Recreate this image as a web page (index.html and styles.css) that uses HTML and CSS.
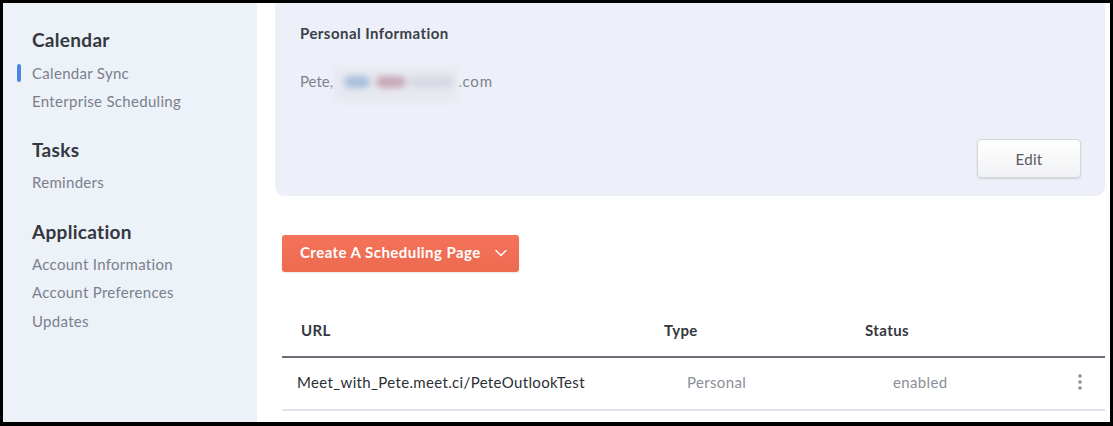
FILE: index.html
```html
<!DOCTYPE html>
<html>
<head>
<meta charset="utf-8">
<link rel="stylesheet" href="styles.css">
</head>
<body>
<div class="frame">
  <aside class="sidebar">
    <div class="group g-cal">
      <h2 class="group-title">Calendar</h2>
      <a class="nav-item active">Calendar Sync</a>
      <a class="nav-item">Enterprise Scheduling</a>
    </div>
    <div class="group g-tasks">
      <h2 class="group-title">Tasks</h2>
      <a class="nav-item">Reminders</a>
    </div>
    <div class="group g-app">
      <h2 class="group-title">Application</h2>
      <a class="nav-item">Account Information</a>
      <a class="nav-item">Account Preferences</a>
      <a class="nav-item">Updates</a>
    </div>
  </aside>
  <main class="main">
    <section class="card">
      <h3 class="card-title">Personal Information</h3>
      <p class="card-line">Pete, <span class="blur"><span class="blob b1"></span><span class="blob b2"></span><span class="blob b3"></span></span><span class="tld">.com</span></p>
      <div class="card-actions">
        <button class="btn-edit">Edit</button>
      </div>
    </section>
    <div class="create-row">
      <button class="btn-create">Create A Scheduling Page
        <svg class="chev" width="12" height="8" viewBox="0 0 12 8"><path d="M1 1.5 L6 6.5 L11 1.5" fill="none" stroke="#fff" stroke-width="1.4" stroke-linecap="round" stroke-linejoin="round"/></svg>
      </button>
    </div>
    <div class="table">
      <div class="thead">
        <div class="c-url">URL</div>
        <div class="c-type">Type</div>
        <div class="c-status">Status</div>
        <div class="c-menu"></div>
      </div>
      <div class="trow">
        <div class="c-url url-val">Meet_with_Pete.meet.ci/PeteOutlookTest</div>
        <div class="c-type muted">Personal</div>
        <div class="c-status muted">enabled</div>
        <div class="c-menu"><svg width="6" height="18" viewBox="0 0 6 18"><circle cx="3" cy="3" r="1.8" fill="#8a8f99"/><circle cx="3" cy="9" r="1.8" fill="#8a8f99"/><circle cx="3" cy="15" r="1.8" fill="#8a8f99"/></svg></div>
      </div>
    </div>
  </main>
</div>
</body>
</html>
```

FILE: styles.css
```css
* { box-sizing: border-box; }
html, body { margin: 0; padding: 0; background: #000; }
body { font-family: Lato, "Open Sans", sans-serif; }
.frame {
  width: 1113px;
  height: 426px;
  border: 3px solid #000;
  border-bottom-width: 4px;
  background: #fff;
  display: flex;
  overflow: hidden;
}
.sidebar {
  width: 254px;
  flex: none;
  background: #edf1f8;
  padding: 25px 0 0 0;
}
.group { display: flex; flex-direction: column; margin-bottom: 23px; }
.group-title {
  margin: 0 0 7px 29px;
  font-size: 19px;
  font-weight: 700;
  letter-spacing: 0.3px;
  color: #333840;
  line-height: 24px;
}
.g-tasks { margin-bottom: 24px; }
.g-tasks .group-title { margin-bottom: 6px; }
.g-app .group-title { margin-bottom: 5.5px; }
.nav-item {
  position: relative;
  padding-left: 29px;
  font-size: 15px;
  letter-spacing: 0.3px;
  line-height: 28px;
  color: #7a808d;
}
.g-app .nav-item { line-height: 28.5px; }
.nav-item.active::before {
  content: "";
  position: absolute;
  left: 14px;
  top: 5px;
  width: 4px;
  height: 18px;
  border-radius: 2px;
  background: #4a86e2;
}
.main {
  flex: 1;
  padding: 0 5px 0 18px;
  display: flex;
  flex-direction: column;
}
.card {
  height: 193px;
  background: #edf0f8;
  border-radius: 0 0 9px 9px;
  padding: 21px 24px 0 25px;
  display: flex;
  flex-direction: column;
}
.card-title {
  margin: 0;
  font-size: 15px;
  font-weight: 700;
  letter-spacing: 0.45px;
  color: #3a3f48;
  line-height: 18px;
}
.card-line {
  margin: 22px 0 0 0;
  font-size: 15px;
  color: #7d828d;
  line-height: 20px;
  display: flex;
  align-items: center;
}
.tld { letter-spacing: 0.8px; }
.blur {
  display: inline-block;
  position: relative;
  width: 124px;
  height: 34px;
  margin: 0 0 0 1px;
  background: #e7e9f0;
  filter: blur(3px);
  top: 4px;
}
.blob { position: absolute; top: 8px; height: 12px; border-radius: 6px; }
.b1 { left: 10px; width: 26px; background: #a9bedc; }
.b2 { left: 42px; width: 30px; background: #c9a9b8; }
.b3 { left: 74px; width: 46px; background: #d8d9e2; }
.card-actions {
  margin-top: auto;
  margin-bottom: 18px;
  display: flex;
  justify-content: flex-end;
}
.btn-edit {
  width: 104px;
  height: 39px;
  border: 1px solid #d3d6dd;
  border-radius: 4px;
  background: linear-gradient(#ffffff, #f1f2f4);
  box-shadow: 0 1px 2px rgba(0,0,0,0.12);
  font-family: Lato, sans-serif;
  font-size: 15px;
  letter-spacing: 0.3px;
  color: #555a63;
}
.create-row { margin-top: 39px; padding-left: 7px; display: flex; }
.btn-create {
  height: 37px;
  width: 237px;
  border: none;
  border-radius: 3px;
  background: linear-gradient(#f4735a, #ec6a50);
  color: #fff;
  font-family: Lato, sans-serif;
  font-size: 15px;
  font-weight: 700;
  letter-spacing: 0.45px;
  display: flex;
  align-items: center;
  padding: 0 0 3px 18px;
  gap: 14px;
  box-shadow: 0 1px 2px rgba(0,0,0,0.1);
}
.chev { margin-top: 1px; }
.table { margin-top: 40px; padding-left: 7px; }
.thead, .trow { display: flex; align-items: center; }
.thead {
  height: 46px;
  border-bottom: 2px solid #6b6e74;
  font-size: 15px;
  font-weight: 700;
  letter-spacing: 0.4px;
  color: #33373e;
  padding-bottom: 8px;
}
.trow {
  height: 53px;
  border-bottom: 2px solid #dfe2e8;
  font-size: 15px;
  letter-spacing: 0.35px;
  padding-bottom: 3px;
}
.c-url { width: 382px; padding-left: 19px; }
.c-type { width: 201px; }
.c-status { flex: 1; }
.c-menu { width: 30px; display: flex; align-items: center; padding-left: 2px; }
.url-val { padding-left: 15px; color: #2b2f36; }
.trow .c-type { padding-left: 23px; }
.trow .c-status { padding-left: 28px; }
.muted { color: #8a8f99; }
```
